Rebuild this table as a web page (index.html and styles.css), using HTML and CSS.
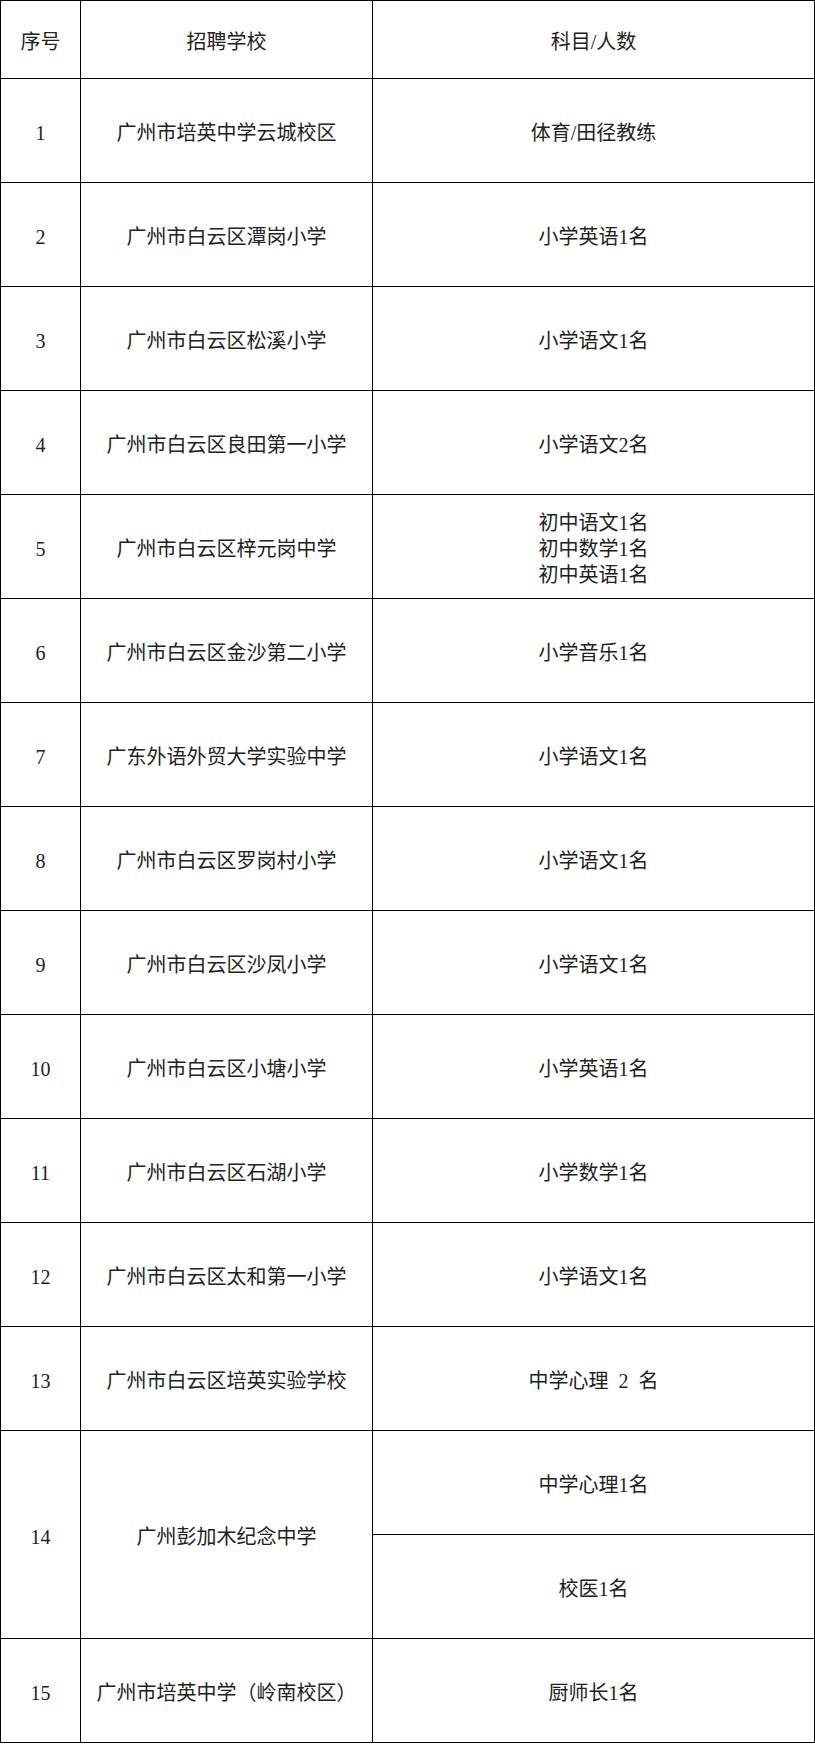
FILE: index.html
```html
<!DOCTYPE html>
<html lang="zh-CN">
<head>
<meta charset="utf-8">
<title>招聘学校</title>
<link rel="stylesheet" href="styles.css">
</head>
<body>
<table class="jobs">
  <colgroup>
    <col class="c-no">
    <col class="c-school">
    <col class="c-subject">
  </colgroup>
  <thead>
    <tr class="head-row"><th>序号</th><th>招聘学校</th><th>科目/人数</th></tr>
  </thead>
  <tbody>
    <tr><td>1</td><td>广州市培英中学云城校区</td><td>体育/田径教练</td></tr>
    <tr><td>2</td><td>广州市白云区潭岗小学</td><td>小学英语1名</td></tr>
    <tr><td>3</td><td>广州市白云区松溪小学</td><td>小学语文1名</td></tr>
    <tr><td>4</td><td>广州市白云区良田第一小学</td><td>小学语文2名</td></tr>
    <tr><td>5</td><td>广州市白云区梓元岗中学</td><td class="multi">初中语文1名<br>初中数学1名<br>初中英语1名</td></tr>
    <tr><td>6</td><td>广州市白云区金沙第二小学</td><td>小学音乐1名</td></tr>
    <tr><td>7</td><td>广东外语外贸大学实验中学</td><td>小学语文1名</td></tr>
    <tr><td>8</td><td>广州市白云区罗岗村小学</td><td>小学语文1名</td></tr>
    <tr><td>9</td><td>广州市白云区沙凤小学</td><td>小学语文1名</td></tr>
    <tr><td>10</td><td>广州市白云区小塘小学</td><td>小学英语1名</td></tr>
    <tr><td>11</td><td>广州市白云区石湖小学</td><td>小学数学1名</td></tr>
    <tr><td>12</td><td>广州市白云区太和第一小学</td><td>小学语文1名</td></tr>
    <tr><td>13</td><td>广州市白云区培英实验学校</td><td class="spaced">中学心理 2 名</td></tr>
    <tr><td rowspan="2">14</td><td rowspan="2">广州彭加木纪念中学</td><td>中学心理1名</td></tr>
    <tr><td>校医1名</td></tr>
    <tr><td>15</td><td>广州市培英中学（岭南校区）</td><td>厨师长1名</td></tr>
  </tbody>
</table>
</body>
</html>
```
FILE: styles.css
```css
html, body {
  margin: 0;
  padding: 0;
  background: #ffffff;
}

.jobs {
  width: 815px;
  table-layout: fixed;
  border-collapse: collapse;
  font-family: "Liberation Serif", "Noto Sans CJK SC", serif;
  font-size: 20px;
  color: #222222;
}

.c-no { width: 80px; }
.c-school { width: 292px; }

.jobs th,
.jobs td {
  border: 1px solid #000000;
  padding: 4px 0 0 0;
  text-align: center;
  vertical-align: middle;
  font-weight: normal;
  line-height: 26px;
}

.head-row { height: 78px; }

.jobs tbody tr { height: 104px; }

.multi { line-height: 26px; }

.spaced { word-spacing: 5px; }
```
